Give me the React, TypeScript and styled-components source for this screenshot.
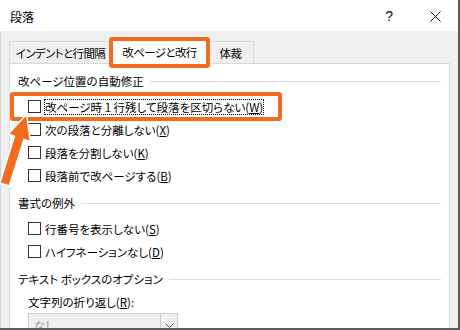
import styled, { createGlobalStyle } from "styled-components";

const ORANGE = "#f26b1f";

const GlobalStyle = createGlobalStyle`
  html, body {
    margin: 0;
    padding: 0;
    overflow: hidden;
    background: #ffffff;
  }
  body {
    font-family: "Noto Sans CJK JP", "Noto Sans", sans-serif;
    font-size: 11.5px;
    font-feature-settings: "palt";
    color: #000;
  }
`;

type Row = { label: string; key: string; focused?: boolean };

const pageRows: Row[] = [
  { label: "改ページ時 1 行残して段落を区切らない", key: "W", focused: true },
  { label: "次の段落と分離しない", key: "X" },
  { label: "段落を分割しない", key: "K" },
  { label: "段落前で改ページする", key: "B" },
];

const exceptionRows: Row[] = [
  { label: "行番号を表示しない", key: "S" },
  { label: "ハイフネーションなし", key: "D" },
];

const CheckRow = ({ row }: { row: Row }) => (
  <RowWrap>
    <CheckBox />
    <RowLabel $focused={row.focused}>
      {row.label}(<u>{row.key}</u>)
    </RowLabel>
  </RowWrap>
);

export default function App() {
  return (
    <>
      <GlobalStyle />
      <Window>
        <TitleBar>
          <Title>段落</Title>
          <TitleButtons>
            <HelpButton>?</HelpButton>
            <CloseButton>
              <svg width="11" height="11" viewBox="0 0 11 11">
                <path d="M0.5 0.5 L10.5 10.5 M10.5 0.5 L0.5 10.5" stroke="#111" strokeWidth="1" />
              </svg>
            </CloseButton>
          </TitleButtons>
        </TitleBar>

        <Body>
          <TabRow>
            <Tab $w={103}>インデントと行間隔</Tab>
            <Tab $w={97} $active>
              改ページと改行
              <TabHighlight />
            </Tab>
            <Tab $w={47}>体裁</Tab>
          </TabRow>

          <Panel>
            <GroupHeader>改ページ位置の自動修正</GroupHeader>
            <Rows>
              <HighlightWrap>
                <CheckRow row={pageRows[0]} />
                <RowHighlight />
              </HighlightWrap>
              {pageRows.slice(1).map((r) => (
                <CheckRow key={r.key} row={r} />
              ))}
            </Rows>

            <GroupHeader>書式の例外</GroupHeader>
            <Rows>
              {exceptionRows.map((r) => (
                <CheckRow key={r.key} row={r} />
              ))}
            </Rows>

            <GroupHeader>テキスト ボックスのオプション</GroupHeader>
            <FieldLabel>
              文字列の折り返し(<u>R</u>):
            </FieldLabel>
            <Select>
              <SelectValue>なし</SelectValue>
              <SelectButton>
                <svg width="9" height="5" viewBox="0 0 9 5">
                  <path d="M0.5 0.5 L4.5 4.5 L8.5 0.5" fill="none" stroke="#555" strokeWidth="1" />
                </svg>
              </SelectButton>
            </Select>
          </Panel>
        </Body>

        <Arrow width="45" height="95" viewBox="0 100 45 95">
          <polygon
            points="26,116 29.5,140.5 23.4,138.4 8.8,185 0.8,182.5 15.4,135.8 9.5,133.8"
            fill={ORANGE}
            stroke="#fff"
            strokeWidth="3"
            strokeLinejoin="round"
            paintOrder="stroke"
          />
        </Arrow>
      </Window>
    </>
  );
}

const Window = styled.div`
  position: relative;
  width: 460px;
  height: 330px;
  box-sizing: border-box;
  border-right: 2px solid #5b5b5b;
  border-bottom: 2px solid #5b5b5b;
  display: flex;
  flex-direction: column;
  overflow: hidden;
  background: #f0f0f0;
`;

const TitleBar = styled.div`
  height: 31px;
  flex: none;
  background: #fff;
  display: flex;
  align-items: center;
  justify-content: space-between;
  padding-left: 10px;
`;

const Title = styled.div`
  font-size: 12px;
  margin-top: 1px;
`;

const TitleButtons = styled.div`
  display: flex;
  align-items: center;
  padding-right: 17px;
`;

const HelpButton = styled.div`
  font-family: "Liberation Sans", sans-serif;
  font-size: 14px;
  color: #111;
  margin-right: 37px;
`;

const CloseButton = styled.div`
  display: flex;
  margin-top: 1px;
`;

const Body = styled.div`
  flex: 1;
  display: flex;
  flex-direction: column;
  padding: 10px 7px 0 8px;
  border-left: 1px solid #d4d4d4;
  min-height: 0;
`;

const TabRow = styled.div`
  display: flex;
  align-items: flex-end;
  height: 22px;
  flex: none;
  position: relative;
  z-index: 1;
`;

const Tab = styled.div<{ $active?: boolean; $w: number }>`
  position: relative;
  box-sizing: border-box;
  width: ${(p) => p.$w}px;
  height: ${(p) => (p.$active ? "25px" : "22px")};
  margin-bottom: ${(p) => (p.$active ? "-1px" : "0")};
  display: flex;
  align-items: center;
  justify-content: center;
  background: ${(p) => (p.$active ? "#fff" : "#f0f0f0")};
  border: 1px solid #d9d9d9;
  border-bottom: none;
  margin-left: ${(p) => (p.$active ? "-1px" : "0")};
  margin-right: ${(p) => (p.$active ? "-1px" : "0")};
  padding-top: ${(p) => (p.$active ? "0" : "1px")};
  z-index: ${(p) => (p.$active ? 2 : 0)};
  letter-spacing: -0.6px;
  white-space: nowrap;
`;

const TabHighlight = styled.div`
  position: absolute;
  left: -3px;
  right: -3px;
  top: -3px;
  bottom: -4px;
  border: 4px solid ${ORANGE};
  border-radius: 3px;
  pointer-events: none;
`;

const Panel = styled.div`
  flex: 1;
  background: #fff;
  border: 1px solid #d9d9d9;
  border-bottom: none;
  margin-right: 1px;
  padding: 8px 8px 0 8px;
  display: flex;
  flex-direction: column;
  align-items: flex-start;
`;

const GroupHeader = styled.div`
  align-self: stretch;
  display: flex;
  align-items: center;
  gap: 6px;
  height: 18px;
  white-space: nowrap;

  &::after {
    content: "";
    flex: 1;
    height: 1px;
    background: #dcdcdc;
  }
`;

const Rows = styled.div`
  display: flex;
  flex-direction: column;
  padding: 5px 0 7px 10px;
`;

const HighlightWrap = styled.div`
  position: relative;
`;

const RowHighlight = styled.div`
  position: absolute;
  left: -18px;
  top: -3px;
  width: 272px;
  height: 29px;
  box-sizing: border-box;
  border: 4px solid ${ORANGE};
  border-radius: 3px;
  pointer-events: none;
`;

const RowWrap = styled.div`
  display: flex;
  align-items: center;
  height: 23px;
  white-space: nowrap;
`;

const CheckBox = styled.div`
  width: 13px;
  height: 13px;
  box-sizing: border-box;
  border: 1px solid #333;
  background: #fff;
  margin-right: 3px;
  flex: none;
`;

const RowLabel = styled.div<{ $focused?: boolean }>`
  padding: 0 1px;
  line-height: 16px;
  outline: ${(p) => (p.$focused ? "1px dotted #000" : "none")};
  outline-offset: -1px;

  u {
    text-underline-offset: 1px;
  }
`;

const FieldLabel = styled.div`
  margin: 6px 0 0 10px;
  height: 16px;
  line-height: 16px;
`;

const Select = styled.div`
  margin: 3px 0 0 10px;
  width: 150px;
  height: 24px;
  box-sizing: border-box;
  border: 1px solid #cccccc;
  background: #f0f0f0;
  display: flex;
`;

const SelectValue = styled.div`
  flex: 1;
  color: #a0a0a0;
  padding: 3px 0 0 5px;
`;

const SelectButton = styled.div`
  width: 16px;
  border-left: 1px solid #cccccc;
  display: flex;
  align-items: center;
  justify-content: center;
`;

const Arrow = styled.svg`
  position: absolute;
  left: 0;
  top: 100px;
  overflow: visible;
  pointer-events: none;
  z-index: 5;
`;
